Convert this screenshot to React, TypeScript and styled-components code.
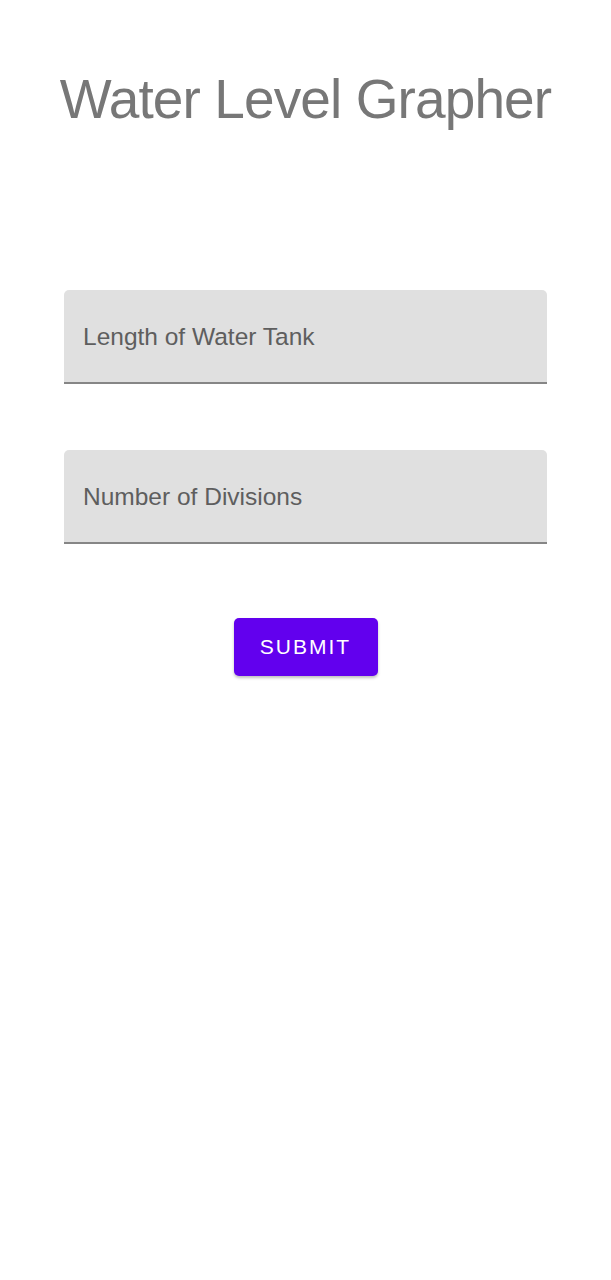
import React from "react";
import styled, { createGlobalStyle } from "styled-components";

const Global = createGlobalStyle`
  html, body { margin: 0; padding: 0; background: #ffffff; }
  body { font-family: "Liberation Sans", Arial, sans-serif; }
`;

const Page = styled.div`
  width: 611px;
  min-height: 1280px;
  display: flex;
  flex-direction: column;
  align-items: center;
  box-sizing: border-box;
  padding-top: 67px;
`;

const Title = styled.h1`
  margin: 0;
  font-family: "Liberation Sans", Arial, sans-serif;
  font-weight: 400;
  font-size: 55px;
  line-height: 64px;
  color: #777777;
  letter-spacing: -0.9px;
`;

const Form = styled.div`
  margin-top: 159px;
  width: 483px;
  display: flex;
  flex-direction: column;
  gap: 66px;
`;

const Field = styled.div`
  height: 94px;
  background: #e0e0e0;
  border-radius: 5px 5px 0 0;
  border-bottom: 2px solid #868686;
  display: flex;
  align-items: center;
  padding-left: 19px;
  padding-top: 2px;
  box-sizing: border-box;
`;

const Label = styled.span`
  font-size: 24.5px;
  color: #5e5e5e;
`;

const Button = styled.button`
  margin-top: 74px;
  width: 144px;
  height: 58px;
  border: none;
  border-radius: 5px;
  background: #6200ee;
  color: #ffffff;
  font-family: "Liberation Sans", Arial, sans-serif;
  font-size: 21px;
  letter-spacing: 2px;
  padding: 0;
  box-shadow: 0 2px 3px rgba(0, 0, 0, 0.25);
`;

export default function App() {
  return (
    <>
      <Global />
      <Page>
        <Title>Water Level Grapher</Title>
        <Form>
          <Field><Label>Length of Water Tank</Label></Field>
          <Field><Label>Number of Divisions</Label></Field>
        </Form>
        <Button>SUBMIT</Button>
      </Page>
    </>
  );
}
